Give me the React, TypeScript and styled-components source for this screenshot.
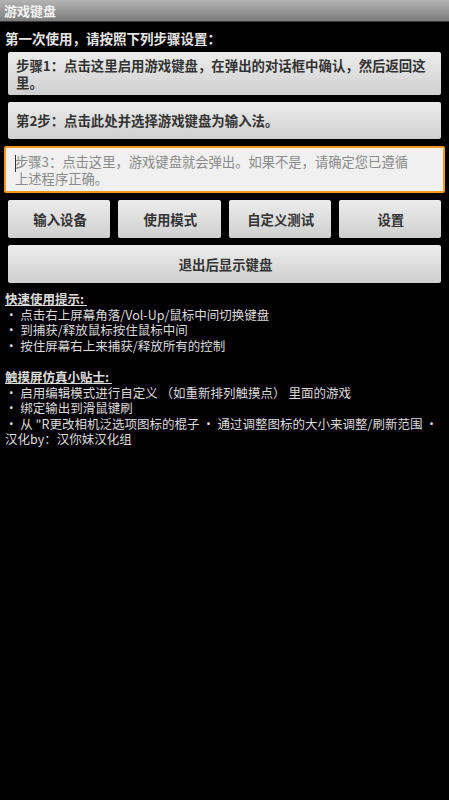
import React from "react";
import styled, { createGlobalStyle } from "styled-components";

const Global = createGlobalStyle`
  html, body { margin: 0; padding: 0; background: #000; }
  body { font-family: "Noto Sans CJK SC", "Noto Sans", sans-serif; }
  * { box-sizing: border-box; }
`;

const Screen = styled.div`
  width: 449px;
  min-height: 800px;
  background: #000;
  display: flex;
  flex-direction: column;
`;

const TitleBar = styled.div`
  height: 22px;
  background: linear-gradient(#b4b4b4, #7c7c7c);
  border-bottom: 1px solid #3a3a3a;
  color: #f4f4f4;
  font-size: 13px;
  font-weight: 700;
  line-height: 21px;
  padding-left: 4px;
`;

const Intro = styled.div`
  color: #e6e6e6;
  font-size: 13.5px;
  font-weight: 700;
  line-height: 18px;
  padding: 7px 5px 5px;
`;

const Stack = styled.div`
  display: flex;
  flex-direction: column;
  gap: 7px;
  padding: 0 8px;
`;

const Button = styled.div<{ $h: number; $center?: boolean }>`
  height: ${(p) => p.$h}px;
  background: linear-gradient(#ececec, #cfcfcf);
  border-radius: 2px;
  color: #333;
  font-size: 13.4px;
  font-weight: 700;
  line-height: 17px;
  white-space: nowrap;
  display: flex;
  flex-direction: column;
  justify-content: center;
  align-items: ${(p) => (p.$center ? "center" : "flex-start")};
  padding: 0 6px 0 8px;
`;

const InputBox = styled.div`
  margin: 0 -4px;
  height: 47px;
  background: #f0f0f0;
  border: 2px solid #f39a1e;
  border-radius: 2px;
  color: #8a8a8a;
  font-size: 13.3px;
  line-height: 17px;
  white-space: nowrap;
  padding: 5px 6px 0 9px;
  position: relative;
`;

const Caret = styled.span`
  position: absolute;
  left: 9px;
  top: 7px;
  width: 1px;
  height: 17px;
  background: #333;
`;

const ButtonRow = styled.div`
  display: grid;
  grid-template-columns: repeat(4, 1fr);
  gap: 8px;
`;

const Tips = styled.div`
  color: #dcdcdc;
  font-size: 12.5px;
  line-height: 15.5px;
  padding: 8px 5px 0;
  display: flex;
  flex-direction: column;
`;

const Heading = styled.div`
  font-weight: 700;
  text-decoration: underline;
  padding-right: 6px;
`;

const Line = styled.div``;

const Gap = styled.div`
  height: 16px;
`;

export default function App() {
  return (
    <>
      <Global />
      <Screen>
        <TitleBar>游戏键盘</TitleBar>
        <Intro>第一次使用，请按照下列步骤设置：</Intro>
        <Stack>
          <Button $h={43}>
            <span>步骤1：点击这里启用游戏键盘，在弹出的对话框中确认，然后返回这</span>
            <span>里。</span>
          </Button>
          <Button $h={37}>第2步：点击此处并选择游戏键盘为输入法。</Button>
          <InputBox>
            <Caret />
            步骤3：点击这里，游戏键盘就会弹出。如果不是，请确定您已遵循
            <br />
            上述程序正确。
          </InputBox>
          <ButtonRow>
            <Button $h={38} $center>输入设备</Button>
            <Button $h={38} $center>使用模式</Button>
            <Button $h={38} $center>自定义测试</Button>
            <Button $h={38} $center>设置</Button>
          </ButtonRow>
          <Button $h={38} $center>退出后显示键盘</Button>
        </Stack>
        <Tips>
          <Heading>快速使用提示:&nbsp;</Heading>
          <Line>• 点击右上屏幕角落/Vol-Up/鼠标中间切换键盘</Line>
          <Line>• 到捕获/释放鼠标按住鼠标中间</Line>
          <Line>• 按住屏幕右上来捕获/释放所有的控制</Line>
          <Gap />
          <Heading>触摸屏仿真小贴士:&nbsp;</Heading>
          <Line>• 启用编辑模式进行自定义 （如重新排列触摸点） 里面的游戏</Line>
          <Line>• 绑定输出到滑鼠键刷</Line>
          <Line>• 从 "R更改相机泛选项图标的棍子 • 通过调整图标的大小来调整/刷新范围 •</Line>
          <Line>汉化by：汉你妹汉化组</Line>
        </Tips>
      </Screen>
    </>
  );
}
